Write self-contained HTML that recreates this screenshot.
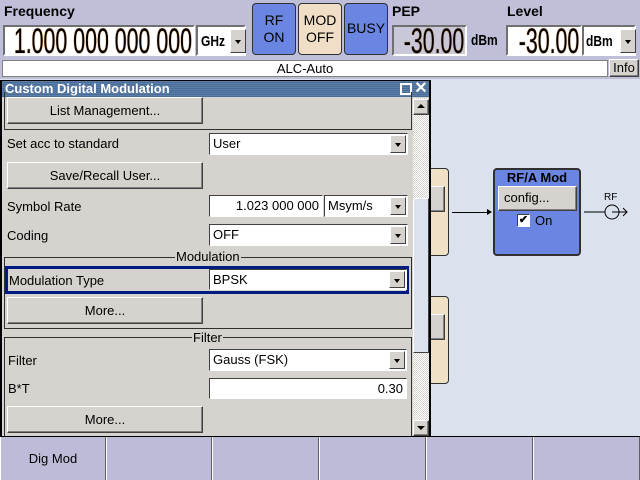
<!DOCTYPE html>
<html><head><meta charset="utf-8"><style>
*{margin:0;padding:0;box-sizing:border-box}
body{width:640px;height:480px;overflow:hidden;background:#dce1ee;font-family:"Liberation Sans",sans-serif;font-size:13px;position:relative;color:#000}
.a{position:absolute;white-space:nowrap}
.lbl{font-weight:bold;font-size:14px}
.big{font-size:35px;text-shadow:0 0 1px #c07020,0 0 1px #c07020;line-height:30px;transform:scaleX(0.61);transform-origin:right center}
.nar{font-weight:bold;font-size:15px;transform:scaleX(0.8);transform-origin:left center}
.field{background:#fff;border:2px solid;border-color:#707070 #fff #fff #707070}
.btn3{background:#d6d3ce;border:1px solid;border-color:#fff #404040 #404040 #fff;box-shadow:inset -1px -1px #808080}
.dd{width:16px;background:#d6d3ce;border:1px solid;border-color:#fff #404040 #404040 #fff}
.dd:after{content:"";position:absolute;left:4px;top:45%;border:3.5px solid transparent;border-top:4px solid #000}
.sel{background:#fff;border:1px solid;border-color:#404040 #fff #fff #404040;font-size:13px;padding-left:3px;line-height:20px}
.stat{border-radius:4px;border:1px solid #303030;text-align:center;font-size:14px;line-height:17px}
.pb{background:#d6d3ce;border:1px solid;border-color:#fff #404040 #404040 #fff;box-shadow:inset -1px -1px #808080;text-align:center;font-size:13px;line-height:26px}
.grp{border:1px solid #303030}
.gt{background:#d6d3ce;padding:0 1px;font-size:13px;line-height:13px}
.sk{top:437px;height:43px;background:#bcbcd8;border-left:1px solid #fff;border-right:1px solid #606060;text-align:center;line-height:43px;font-size:13px}
</style></head><body>
<div class="a" style="left:0;top:0;width:640px;height:79px;background:#bfbfd9"></div>
<div class="a lbl" style="left:4px;top:3px">Frequency</div>
<div class="a field" style="left:3px;top:25px;width:192px;height:31px;overflow:hidden"><div class="a big" style="right:1px;top:0">1.000 000 000 000</div></div>
<div class="a field" style="left:196px;top:25px;width:50px;height:31px"><span class="a nar" style="left:3px;top:6px">GHz</span><div class="a dd" style="left:32px;top:2px;height:24px"></div></div>
<div class="a stat" style="left:252px;top:3px;width:44px;height:52px;background:#6a86e2;padding-top:8px">RF<br>ON</div>
<div class="a stat" style="left:298px;top:3px;width:44px;height:52px;background:#f0dfc6;padding-top:8px">MOD<br>OFF</div>
<div class="a stat" style="left:344px;top:3px;width:44px;height:52px;background:#6a86e2;padding-top:16px">BUSY</div>
<div class="a lbl" style="left:392px;top:3px">PEP</div>
<div class="a" style="left:392px;top:25px;width:75px;height:31px;background:#c8c8d8;border:2px solid;border-color:#707070 #fff #fff #707070;overflow:hidden"><div class="a big" style="right:1px;top:0">-30.00</div></div>
<div class="a nar" style="left:471px;top:32px">dBm</div>
<div class="a lbl" style="left:507px;top:3px">Level</div>
<div class="a field" style="left:506px;top:25px;width:76px;height:31px;overflow:hidden"><div class="a big" style="right:1px;top:0">-30.00</div></div>
<div class="a field" style="left:582px;top:25px;width:54px;height:31px"><span class="a nar" style="left:2px;top:6px">dBm</span><div class="a dd" style="left:36px;top:2px;height:24px"></div></div>
<div class="a" style="left:2px;top:60px;width:606px;height:17px;background:#fff;border:1px solid #808080;text-align:center;line-height:15px;font-size:13px">ALC-Auto</div>
<div class="a btn3" style="left:609px;top:59px;width:30px;height:18px;text-align:center;line-height:16px;font-size:13px">Info</div>

<div class="a" style="left:420px;top:168px;width:29px;height:88px;background:#f0e0c6;border:1px solid #303030;border-radius:4px"></div>
<div class="a btn3" style="left:420px;top:186px;width:25px;height:26px"></div>
<div class="a" style="left:420px;top:296px;width:29px;height:88px;background:#f0e0c6;border:1px solid #303030;border-radius:4px"></div>
<div class="a btn3" style="left:420px;top:314px;width:25px;height:26px"></div>
<div class="a" style="left:452px;top:212px;width:36px;height:1px;background:#000"></div>
<div class="a" style="left:487px;top:209px;border:3px solid transparent;border-left:5px solid #000;border-right:0"></div>
<div class="a" style="left:493px;top:168px;width:88px;height:88px;background:#6a86e2;border:2px solid #303030;border-radius:4px"></div>
<div class="a" style="left:493px;top:170px;width:88px;text-align:center;font-weight:bold;font-size:13px">RF/A Mod</div>
<div class="a btn3" style="left:498px;top:186px;width:79px;height:25px;line-height:22px;padding-left:5px;font-size:13px">config...</div>
<div class="a" style="left:517px;top:214px;width:13px;height:13px;background:#fff;border:1px solid;border-color:#404040 #fff #fff #404040;font-size:11px;line-height:10px;text-align:center;font-weight:bold">✔</div>
<div class="a" style="left:535px;top:213px;font-size:13px">On</div>
<svg class="a" style="left:583px;top:188px" width="57" height="40"><text x="21" y="12" font-family="Liberation Sans" font-size="10">RF</text><line x1="1" y1="24" x2="22" y2="24" stroke="#000"/><circle cx="29" cy="24" r="7" fill="none" stroke="#000"/><line x1="29" y1="24" x2="44" y2="24" stroke="#000"/><polyline points="40,20 44,24 40,28" fill="none" stroke="#000"/></svg>

<div class="a" style="left:0;top:80px;width:431px;height:358px;background:#d6d3ce;border:2px solid #000;border-top:1px solid #000"></div>
<div class="a" style="left:2px;top:81px;width:427px;height:16px;background:repeating-linear-gradient(#5c7ea8 0 1px,#4a6d98 1px 2px);color:#fff;font-weight:bold;font-size:13px;line-height:16px;padding-left:3px">Custom Digital Modulation</div>
<div class="a" style="left:400px;top:83px;width:12px;height:12px;border:2px solid #fff"></div>
<div class="a" style="left:414px;top:82px;width:14px;height:14px;color:#fff;font-size:16px;line-height:13px;text-align:center;font-weight:bold">✕</div>
<div class="a" style="left:413px;top:98px;width:16px;height:338px;background:repeating-conic-gradient(#d6d3ce 0 25%,#fff 0 50%) 0 0/2px 2px"></div>
<div class="a btn3" style="left:413px;top:99px;width:16px;height:16px"></div>
<div class="a" style="left:417px;top:104px;border:4px solid transparent;border-bottom:4px solid #000;border-top:0"></div>
<div class="a" style="left:413px;top:198px;width:16px;height:155px;background:#dce1ee;border:1px solid;border-color:#fff #404040 #404040 #fff"></div>
<div class="a btn3" style="left:413px;top:420px;width:16px;height:16px"></div>
<div class="a" style="left:417px;top:426px;border:4px solid transparent;border-top:4px solid #000;border-bottom:0"></div>

<div class="a grp" style="left:4px;top:92px;width:408px;height:38px;border-top:none"></div>
<div class="a pb" style="left:7px;top:97px;width:196px;height:27px">List Management...</div>
<div class="a" style="left:7px;top:136px">Set acc to standard</div>
<div class="a sel" style="left:209px;top:133px;width:199px;height:22px">User</div><div class="a dd" style="left:390px;top:135px;height:18px"></div>
<div class="a pb" style="left:7px;top:162px;width:196px;height:27px">Save/Recall User...</div>
<div class="a" style="left:7px;top:199px">Symbol Rate</div>
<div class="a sel" style="left:209px;top:195px;width:114px;height:22px;text-align:right;padding-right:3px">1.023 000 000</div>
<div class="a sel" style="left:324px;top:195px;width:84px;height:22px">Msym/s</div><div class="a dd" style="left:390px;top:197px;height:18px"></div>
<div class="a" style="left:7px;top:228px">Coding</div>
<div class="a sel" style="left:209px;top:224px;width:199px;height:22px">OFF</div><div class="a dd" style="left:390px;top:226px;height:18px"></div>

<div class="a grp" style="left:4px;top:257px;width:408px;height:72px"></div>
<div class="a gt" style="left:175px;top:250px">Modulation</div>
<div class="a" style="left:5px;top:266px;width:404px;height:28px;border:3px solid #001c80"></div>
<div class="a" style="left:9px;top:273px">Modulation Type</div>
<div class="a sel" style="left:209px;top:269px;width:198px;height:21px;line-height:19px">BPSK</div><div class="a dd" style="left:389px;top:271px;height:17px"></div>
<div class="a pb" style="left:7px;top:297px;width:196px;height:27px">More...</div>

<div class="a grp" style="left:4px;top:337px;width:408px;height:101px;border-bottom:none"></div>
<div class="a gt" style="left:192px;top:331px">Filter</div>
<div class="a" style="left:8px;top:353px">Filter</div>
<div class="a sel" style="left:209px;top:349px;width:198px;height:22px">Gauss (FSK)</div><div class="a dd" style="left:389px;top:351px;height:18px"></div>
<div class="a" style="left:8px;top:381px">B*T</div>
<div class="a sel" style="left:209px;top:378px;width:198px;height:21px;text-align:right;padding-right:3px">0.30</div>
<div class="a pb" style="left:7px;top:406px;width:196px;height:27px">More...</div>

<div class="a" style="left:0;top:436px;width:640px;height:1px;background:#000"></div>
<div class="a sk" style="left:0;width:106px">Dig Mod</div>
<div class="a sk" style="left:106px;width:106px"></div>
<div class="a sk" style="left:212px;width:107px"></div>
<div class="a sk" style="left:319px;width:107px"></div>
<div class="a sk" style="left:426px;width:107px"></div>
<div class="a sk" style="left:533px;width:107px"></div>
</body></html>
